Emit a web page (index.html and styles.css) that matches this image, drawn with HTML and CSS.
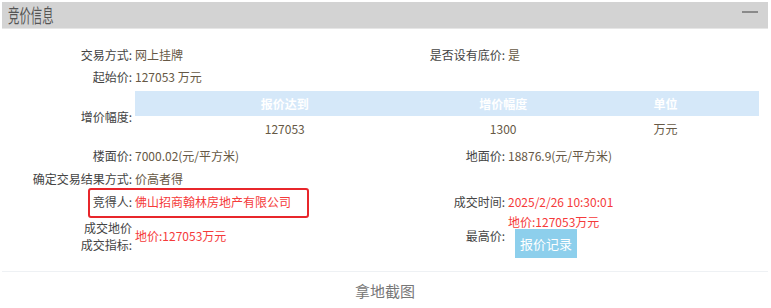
FILE: index.html
```html
<!DOCTYPE html>
<html>

<head>
	<meta charset="utf-8">
	<link rel="stylesheet" href="styles.css">
</head>

<body>
	<div class="panel">
		<div class="panel-head">
			<span class="panel-title">竞价信息</span>
			<span class="panel-fold"></span>
		</div>
		<div class="panel-body">
			<div class="row">
				<span class="lbl">交易方式:</span>
				<span class="val">网上挂牌</span>
				<span class="lbl">是否设有底价:</span>
				<span class="val">是</span>
			</div>
			<div class="row">
				<span class="lbl">起始价:</span>
				<span class="val">127053 万元</span>
			</div>
			<div class="row-table">
				<span class="lbl">增价幅度:</span>
				<table class="step">
					<tr>
						<th class="c1">报价达到</th>
						<th class="c2">增价幅度</th>
						<th class="c3">单位</th>
					</tr>
					<tr>
						<td>127053</td>
						<td>1300</td>
						<td>万元</td>
					</tr>
				</table>
			</div>
			<div class="row tall">
				<span class="lbl">楼面价:</span>
				<span class="val">7000.02(元/平方米)</span>
				<span class="lbl">地面价:</span>
				<span class="val">18876.9(元/平方米)</span>
			</div>
			<div class="row tall">
				<span class="lbl">确定交易结果方式:</span>
				<span class="val">价高者得</span>
			</div>
			<div class="row tall winner">
				<span class="lbl">竞得人:</span>
				<span class="val red">佛山招商翰林房地产有限公司</span>
				<span class="lbl">成交时间:</span>
				<span class="val red">2025/2/26 10:30:01</span>
				<span class="mark"></span>
			</div>
			<div class="row last">
				<span class="lbl two">成交地价<br>成交指标:</span>
				<span class="val red">地价:127053万元</span>
				<span class="lbl">最高价:</span>
				<span class="val">
					<span class="red top-price">地价:127053万元</span>
					<button class="btn-record">报价记录</button>
				</span>
			</div>
		</div>
		<div class="panel-foot">拿地截图</div>
	</div>
</body>

</html>
```

FILE: styles.css
```css
html, body {
	margin: 0;
	padding: 0;
	background: #fff;
}

body {
	font-family: "Noto Sans CJK SC", "Noto Sans", sans-serif;
	font-size: 12px;
	color: #444;
}

.panel {
	margin: 2px;
	width: 766px;
}

/* header bar */
.panel-head {
	height: 26px;
	background: #d3d3d3;
	border-bottom: 1px solid #e6e6e6;
	display: flex;
	align-items: center;
	justify-content: space-between;
}

.panel-title {
	display: inline-block;
	font-size: 19px;
	line-height: 26px;
	color: #555;
	margin-left: 6px;
	transform: scaleX(0.6);
	transform-origin: left center;
}

.panel-fold {
	width: 16px;
	height: 2px;
	background: #8a8a8a;
	margin-right: 10px;
	margin-bottom: 6px;
}

.panel-body {
	padding-top: 15px;
}

/* label / value rows */
.row {
	display: grid;
	grid-template-columns: 130px 232px 135px 1fr;
	column-gap: 3px;
	align-items: center;
	height: 22px;
	line-height: 16px;
}

.row.tall {
	height: 23px;
}

.lbl {
	text-align: right;
	color: #444;
	white-space: nowrap;
}

.val {
	color: #665845;
	white-space: nowrap;
}

.red {
	color: #f53a3a;
}

.row-table {
	display: grid;
	grid-template-columns: 130px 1fr;
	column-gap: 3px;
	align-items: center;
	margin: 3px 0;
}

.step {
	border-collapse: collapse;
	width: 624px;
	font-size: 12px;
}

.step th {
	background: #d5e8f9;
	color: #fff;
	font-weight: bold;
	height: 25px;
	padding: 0;
}

.step td {
	color: #665845;
	text-align: center;
	height: 25px;
	padding: 0;
}

.step .c1 {
	width: 48%;
}

.step .c2 {
	width: 22%;
}

/* red annotation frame */
.winner {
	position: relative;
}

.mark {
	position: absolute;
	left: 86px;
	top: -2px;
	width: 217px;
	height: 26px;
	border: 2px solid #e8262b;
	border-radius: 3px;
}

.row.last {
	height: 44px;
	margin-top: 1px;
}

.lbl.two {
	line-height: 17px;
}

.top-price {
	display: block;
	line-height: 16px;
}

.btn-record {
	display: block;
	margin: -1px 0 0 7px;
	height: 29px;
	padding: 0 5px;
	border: none;
	background: #8dcfec;
	color: #fff;
	font-family: "Noto Sans CJK SC", sans-serif;
	font-size: 13px;
}

.panel-foot {
	margin-top: 13px;
	border-top: 1px solid #eef1f4;
	padding-top: 8px;
	text-align: center;
	font-size: 15px;
	line-height: 22px;
	color: #777;
}
```
